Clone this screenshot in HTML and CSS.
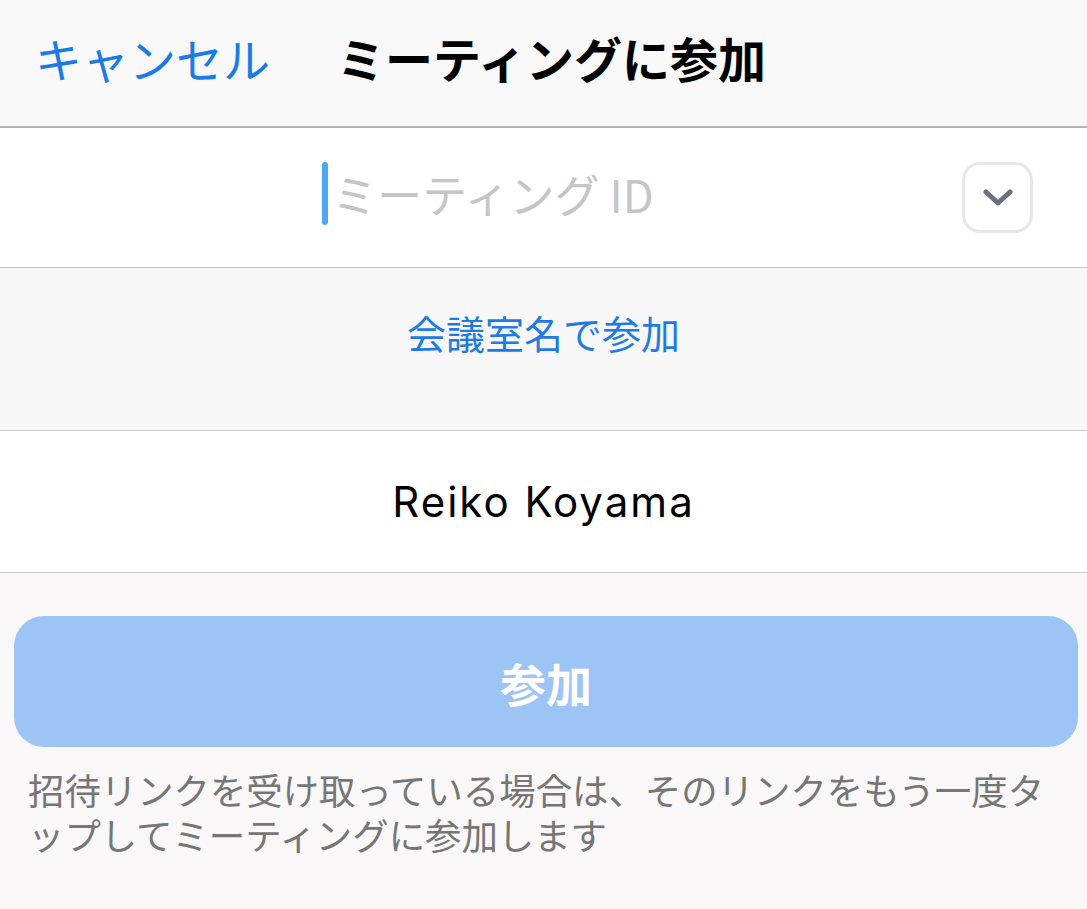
FILE: index.html
```html
<!DOCTYPE html>
<html lang="ja">
<head>
<meta charset="utf-8">
<title>ミーティングに参加</title>
<link rel="stylesheet" href="styles.css">
</head>
<body>
<header class="navbar">
  <span class="nav-cancel">キャンセル</span>
  <h1 class="nav-title">ミーティングに参加</h1>
</header>
<section class="id-row">
  <div class="id-input">
    <span class="caret"></span><span class="placeholder">ミーティング ID</span>
  </div>
  <div class="dropdown">
    <svg width="30" height="18" viewBox="0 0 30 18"><path d="M3 3 L15 14 L27 3" fill="none" stroke="#6f6d82" stroke-width="5" stroke-linecap="round" stroke-linejoin="round"/></svg>
  </div>
</section>
<section class="room-row">
  <span class="room-link">会議室名で参加</span>
</section>
<section class="name-row">
  <span class="name">Reiko Koyama</span>
</section>
<main class="bottom">
  <div class="join-btn">参加</div>
  <p class="hint">招待リンクを受け取っている場合は、そのリンクをもう一度タ<br>ップしてミーティングに参加します</p>
</main>
</body>
</html>
```
FILE: styles.css
```css
html, body {
  margin: 0;
  padding: 0;
}
body {
  width: 1087px;
  height: 909px;
  background: #f9f7f8;
  font-family: "Noto Sans CJK JP", "Noto Sans", sans-serif;
  overflow: hidden;
}
.navbar {
  height: 114px;
  padding-bottom: 12px;
  background: #f8f8f8;
  border-bottom: 2px solid #b3b3b3;
  display: flex;
  align-items: center;
  padding-left: 35px;
  gap: 67px;
}
.nav-cancel {
  color: #1a7be6;
  font-size: 47px;
  line-height: 1;
}
.nav-title {
  margin: 0;
  font-size: 48px;
  font-weight: 700;
  line-height: 1;
  color: #000;
}
.id-row {
  height: 139px;
  background: #fff;
  border-bottom: 1px solid #c8c7cc;
  display: flex;
  align-items: center;
}
.id-input {
  flex: 1;
  display: flex;
  align-items: center;
  justify-content: center;
  padding-left: 14px;
  padding-bottom: 8px;
}
.caret {
  width: 6px;
  height: 63px;
  border-radius: 3px;
  background: #4ea7f6;
  margin-right: 4px;
}
.placeholder {
  font-size: 45px;
  color: #c5c5c7;
  line-height: 1;
}
.dropdown {
  width: 65px;
  height: 65px;
  border: 3px solid #e7e6ed;
  border-radius: 18px;
  margin-right: 54px;
  display: flex;
  align-items: center;
  justify-content: center;
  box-sizing: content-box;
}
.room-row {
  height: 121px;
  padding-top: 41px;
  background: #f8f7f8;
  border-bottom: 1px solid #c8c7cc;
  display: flex;
  justify-content: center;
  align-items: flex-start;
}
.room-link {
  color: #1f7ae2;
  font-size: 39px;
  line-height: 46px;
}
.name-row {
  height: 141px;
  background: #fff;
  border-bottom: 1px solid #c8c7cc;
  display: flex;
  align-items: center;
  justify-content: center;
}
.name {
  font-family: "Inter", "Noto Sans", sans-serif;
  font-size: 42px;
  letter-spacing: 2px;
  color: #000;
}
.bottom {
  padding: 43px 9px 0 14px;
}
.join-btn {
  height: 131px;
  border-radius: 30px;
  background: #9cc4f5;
  color: #fff;
  font-size: 46px;
  font-weight: 700;
  display: flex;
  align-items: center;
  justify-content: center;
}
.hint {
  margin: 20px 0 0 14px;
  font-size: 36.4px;
  line-height: 45px;
  color: #767676;
}
```
